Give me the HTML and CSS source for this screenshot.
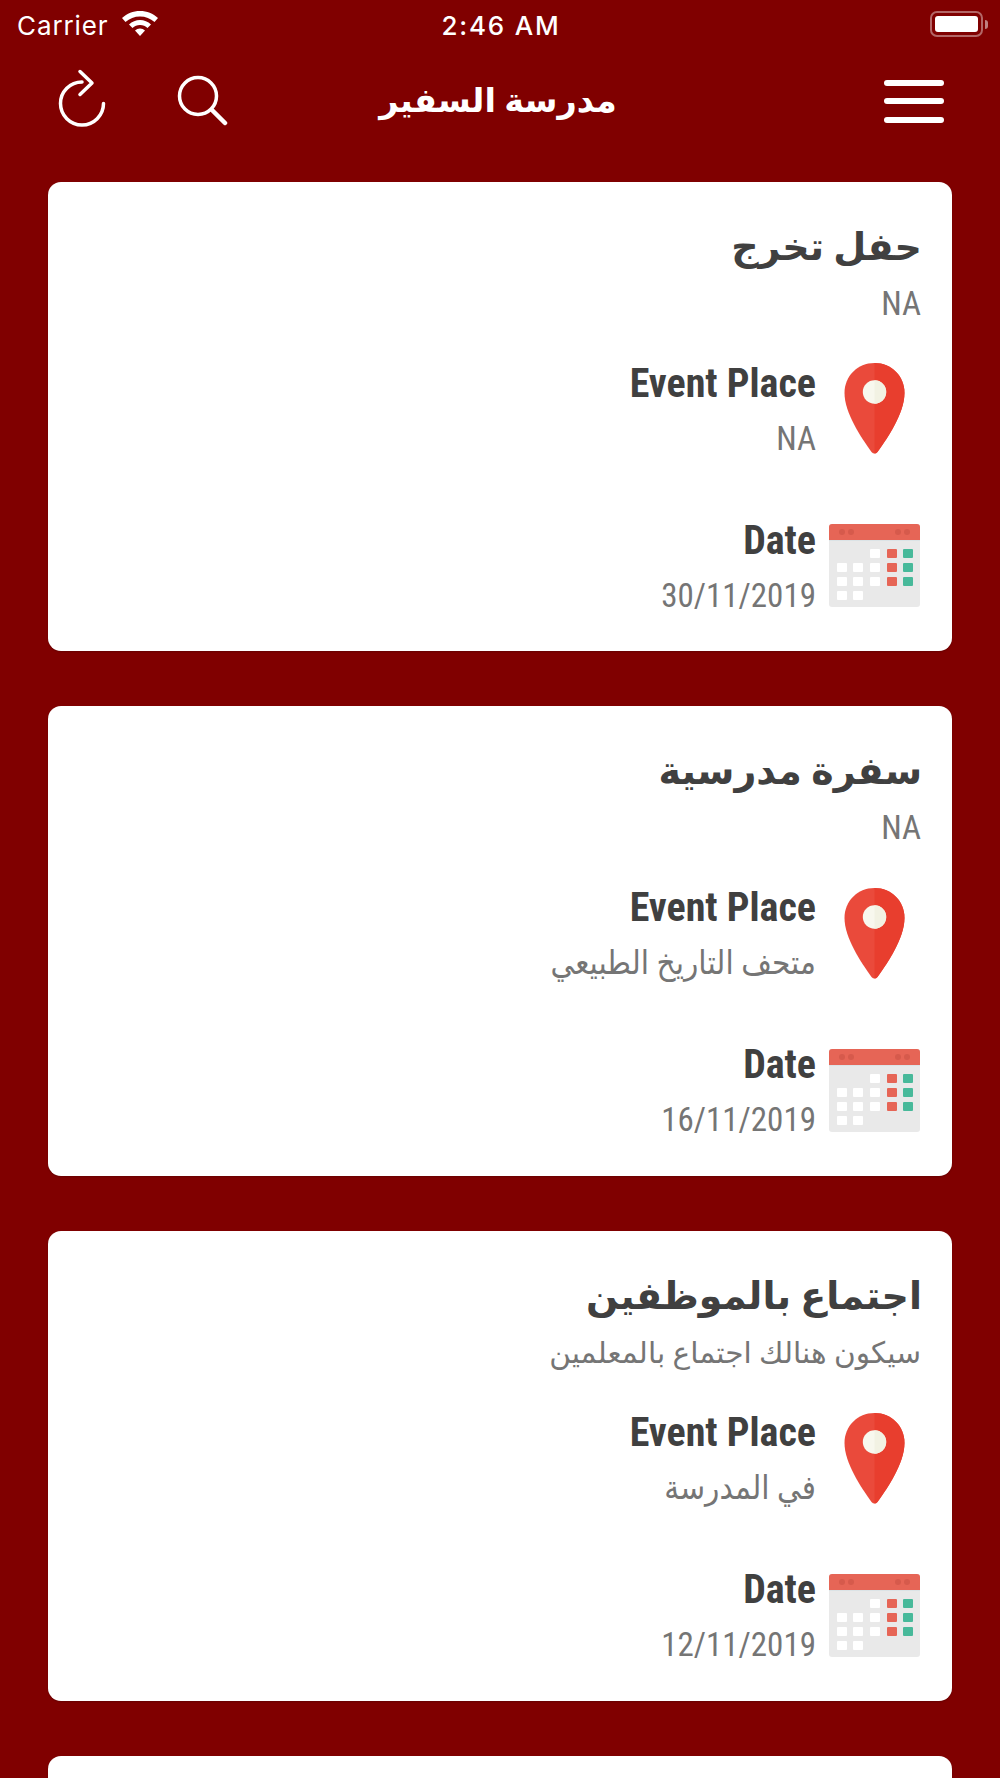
FILE: index.html
```html
<!DOCTYPE html>
<html>
  <head>
    <meta charset="UTF-8" />
    <meta name="viewport" content="width=device-width, initial-scale=1.0" />
    <title>مدرسة السفير</title>
    <link rel="stylesheet" href="styles.css">
  </head>
  <body>
    <svg class="icon-defs" width="0" height="0">
      <symbol id="pin" viewBox="0 0 60 91">
        <path fill="#ea4a3b" d="M30 0C13 0 0 13 0 30C0 50 17 75 27 89Q30 92 33 89C43 75 60 50 60 30C60 13 47 0 30 0Z" />
        <path fill="#e83e2e" d="M30 0C47 0 60 13 60 30C60 50 43 75 33 89Q31.500 90.500 30 90.500Z" />
        <circle cx="30" cy="29" r="11.700" fill="#f8f8ee" />
        <path fill="#f2f2e3" d="M30 17.300A11.700 11.700 0 0 1 30 40.700Z" />
      </symbol>
      <symbol id="calendar" viewBox="0 0 91 91">
        <rect y="4" width="91" height="83" rx="3" fill="#e9e9e9" />
        <path fill="#e66556" d="M0 20V7a3 3 0 0 1 3-3H88a3 3 0 0 1 3 3V20Z" />
        <rect y="20" width="91" height="1" fill="#dbe3e6" />
        <g fill="#d65a4c">
          <circle cx="13" cy="12" r="3" /><circle cx="22" cy="12" r="3" />
          <circle cx="69" cy="12" r="3" /><circle cx="78" cy="12" r="3" />
        </g>
        <g fill="#fff">
          <rect x="41" y="29" width="10" height="9" rx="1" />
          <rect x="8" y="43" width="10" height="9" rx="1" /><rect x="24" y="43" width="10" height="9" rx="1" /><rect x="41" y="43" width="10" height="9" rx="1" />
          <rect x="8" y="57" width="10" height="9" rx="1" /><rect x="24" y="57" width="10" height="9" rx="1" /><rect x="41" y="57" width="10" height="9" rx="1" />
          <rect x="8" y="71" width="10" height="9" rx="1" /><rect x="24" y="71" width="10" height="9" rx="1" />
        </g>
        <g fill="#e66556">
          <rect x="58" y="29" width="10" height="9" rx="1" /><rect x="58" y="43" width="10" height="9" rx="1" /><rect x="58" y="57" width="10" height="9" rx="1" />
        </g>
        <g fill="#48b99a">
          <rect x="74" y="29" width="10" height="9" rx="1" /><rect x="74" y="43" width="10" height="9" rx="1" /><rect x="74" y="57" width="10" height="9" rx="1" />
        </g>
      </symbol>
    </svg>

    <div class="screen">
      <div class="status-bar">
        <div class="status-left">
          <span>Carrier</span>
          <svg class="wifi" width="38" height="28" viewBox="0 0 38 28">
            <path fill="#fff" d="M19 2C12 2 6 4.500 1 9L4.500 13C8.500 9.500 13.500 7.500 19 7.500S29.500 9.500 33.500 13L37 9C32 4.500 26 2 19 2Z" />
            <path fill="#fff" d="M19 11C15 11 11 12.500 8 15.500L11.500 19C13.500 17.200 16 16 19 16S24.500 17.200 26.500 19L30 15.500C27 12.500 23 11 19 11Z" />
            <path fill="#fff" d="M19 19.500C17 19.500 15.500 20.200 14 21.500L19 27L24 21.500C22.500 20.200 21 19.500 19 19.500Z" />
          </svg>
        </div>
        <div class="status-time">2:46 AM</div>
        <div class="status-right">
          <div class="battery"><div class="battery-level"></div></div>
          <div class="battery-nub"></div>
        </div>
      </div>

      <div class="nav">
        <div class="nav-actions">
          <svg width="52" height="60" viewBox="0 0 52 60" fill="none" stroke="#fff" stroke-width="3.500" stroke-linecap="round" stroke-linejoin="round">
            <path d="M26 13A21.500 21.500 0 1 0 47.500 34.500" />
            <path d="M24 2.500L36 14L24 25.500" />
          </svg>
          <svg width="52" height="60" viewBox="0 0 52 60" fill="none" stroke="#fff" stroke-linecap="round">
            <circle cx="22" cy="27" r="18.500" stroke-width="3.500" />
            <path d="M36 41L49 54" stroke-width="4.500" />
          </svg>
        </div>
        <div class="nav-title">مدرسة السفير</div>
        <div class="nav-menu">
          <div class="menu-bar"></div>
          <div class="menu-bar"></div>
          <div class="menu-bar"></div>
        </div>
      </div>

      <div class="event-list">
        <div class="event-card">
          <div class="event-title">حفل تخرج</div>
          <div class="event-desc">NA</div>
          <div class="event-row">
            <div class="row-text">
              <div class="row-label">Event Place</div>
              <div class="row-value">NA</div>
            </div>
            <svg class="row-icon"><use href="#pin" /></svg>
          </div>
          <div class="event-row">
            <div class="row-text">
              <div class="row-label">Date</div>
              <div class="row-value">30/11/2019</div>
            </div>
            <svg class="row-icon"><use href="#calendar" /></svg>
          </div>
        </div>

        <div class="event-card">
          <div class="event-title">سفرة مدرسية</div>
          <div class="event-desc">NA</div>
          <div class="event-row">
            <div class="row-text">
              <div class="row-label">Event Place</div>
              <div class="row-value">متحف التاريخ الطبيعي</div>
            </div>
            <svg class="row-icon"><use href="#pin" /></svg>
          </div>
          <div class="event-row">
            <div class="row-text">
              <div class="row-label">Date</div>
              <div class="row-value">16/11/2019</div>
            </div>
            <svg class="row-icon"><use href="#calendar" /></svg>
          </div>
        </div>

        <div class="event-card">
          <div class="event-title">اجتماع بالموظفين</div>
          <div class="event-desc event-desc-ar">سيكون هنالك اجتماع بالمعلمين</div>
          <div class="event-row">
            <div class="row-text">
              <div class="row-label">Event Place</div>
              <div class="row-value">في المدرسة</div>
            </div>
            <svg class="row-icon"><use href="#pin" /></svg>
          </div>
          <div class="event-row">
            <div class="row-text">
              <div class="row-label">Date</div>
              <div class="row-value">12/11/2019</div>
            </div>
            <svg class="row-icon"><use href="#calendar" /></svg>
          </div>
        </div>

        <div class="event-card"></div>
      </div>
    </div>
  </body>
</html>
```

FILE: styles.css
```css
html,
body {
  margin: 0;
  padding: 0;
}
.icon-defs {
  display: block;
  height: 0;
}
.screen {
  height: 1778px;
  overflow: hidden;
  background-color: #800000;
  font-family: Roboto, "DejaVu Sans", sans-serif;
}
.status-bar {
  display: grid;
  grid-template-columns: 1fr auto 1fr;
  align-items: center;
  height: 50px;
  padding: 0 12px 0 17px;
  color: #fff;
  font-family: Inter, "Liberation Sans", sans-serif;
  font-size: 26px;
  letter-spacing: 0.9px;
}
.status-left {
  display: flex;
  align-items: center;
  gap: 12px;
}
.wifi {
  margin-top: -5px;
}
.status-time {
  margin-right: 3px;
  font-weight: 500;
  letter-spacing: 1.8px;
}
.status-right {
  display: flex;
  align-items: center;
  justify-content: flex-end;
  gap: 2px;
  margin-top: -2px;
}
.battery {
  box-sizing: border-box;
  width: 53px;
  height: 26px;
  padding: 3px;
  border: 2px solid rgba(255, 255, 255, 0.4);
  border-radius: 7px;
}
.battery-level {
  height: 100%;
  background-color: #fff;
  border-radius: 3px;
}
.battery-nub {
  width: 3px;
  height: 9px;
  background-color: rgba(255, 255, 255, 0.5);
  border-radius: 0 3px 3px 0;
}
.nav {
  display: grid;
  grid-template-columns: 1fr auto 1fr;
  align-items: center;
  height: 60px;
  margin-top: 19px;
  padding: 0 56px;
  color: #fff;
}
.nav-actions {
  display: flex;
  gap: 68px;
}
.nav-title {
  margin: 4px 4px 0 0;
  font-size: 33.500px;
  font-weight: bold;
  line-height: 56px;
}
.nav-menu {
  display: flex;
  flex-direction: column;
  gap: 12.500px;
  justify-self: end;
  width: 60px;
  margin-top: 4px;
}
.menu-bar {
  height: 6px;
  background-color: #fff;
  border-radius: 3px;
}
.event-list {
  display: flex;
  flex-direction: column;
  gap: 55.200px;
  margin-top: 52.600px;
  padding: 0 48px;
}
.event-card {
  flex-shrink: 0;
  box-sizing: border-box;
  height: 469.600px;
  padding: 37px 32px 0;
  background-color: #fff;
  border-radius: 13px;
  box-shadow: 0 1px 2px rgba(0, 0, 0, 0.2);
  text-align: right;
}
.event-title {
  margin-right: -2px;
  color: #404040;
  font-size: 38px;
  font-weight: bold;
  line-height: 56px;
}
.event-desc {
  margin: 1px -1px 23px 0;
  color: #757575;
  font-size: 33px;
  font-stretch: condensed;
  line-height: 56px;
}
.event-desc-ar {
  font-size: 29.600px;
  font-stretch: normal;
}
.event-row {
  display: flex;
  justify-content: flex-end;
  gap: 13px;
  height: 110px;
  margin-bottom: 47px;
}
.row-text {
  padding-top: 2px;
  font-stretch: condensed;
  line-height: 55px;
}
.row-label {
  color: #404040;
  font-size: 40px;
  font-weight: bold;
  line-height: 54px;
}
.row-value {
  color: #757575;
  font-size: 33px;
}
.row-icon {
  width: 91px;
  height: 91px;
  margin-top: 8.500px;
}
```
